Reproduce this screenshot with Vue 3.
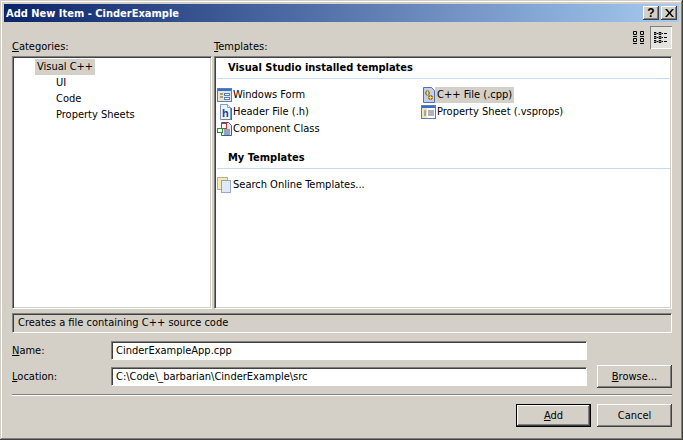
<script setup>
const categories = ['UI', 'Code', 'Property Sheets']
</script>

<template>
  <div class="dialog">
    <div class="titlebar">
      <span class="title">Add New Item - CinderExample</span>
      <button class="cap-btn help">?</button>
      <button class="cap-btn">
        <svg width="9" height="8" viewBox="0 0 9 8"><path d="M0 0h2l2.500 3L7 0h2L5.500 4 9 8H7L4.500 5 2 8H0l3.500-4z" fill="#000"/></svg>
      </button>
    </div>

    <div class="content">
      <div class="labels">
        <div class="cat-label"><u>C</u>ategories:</div>
        <div class="tpl-label">
          <span><u>T</u>emplates:</span>
          <div class="views">
            <span class="view-btn">
              <svg width="13" height="14" viewBox="0 0 13 14" fill="none" stroke="#000">
                <path d="M1.500 .5h3v3h-3zM1.500 7.500h3v3h-3zM8.500 .5h3v3h-3zM8.500 7.500h3v3h-3z"/>
                <path d="M1 5.500h4M1 12.500h4M8 5.500h4M8 12.500h4"/>
              </svg>
            </span>
            <span class="view-btn active">
              <svg width="14" height="12" viewBox="0 0 14 12" fill="none" stroke="#000">
                <path d="M0 .5h2v2H0zM5 .5h2v2H5zM0 4.500h2v2H0zM5 4.500h2v2H5zM0 8.500h2v2H0zM5 8.500h2v2H5z"/>
                <path d="M3 1.500h1M8 1.500h1M3 5.500h1M8 5.500h1M3 9.500h1M8 9.500h1"/>
                <path d="M10 1.500h3M10 5.500h3M10 9.500h3"/>
              </svg>
            </span>
          </div>
        </div>
      </div>

      <div class="panes">
        <div class="sunken tree">
          <div class="tree-root"><span class="selected">Visual C++</span></div>
          <div v-for="c in categories" :key="c" class="tree-child">{{ c }}</div>
        </div>

        <div class="sunken templates">
          <div class="group-head">Visual Studio installed templates</div>
          <div class="columns">
            <div class="col">
              <div class="item">
                <svg class="ico" width="16" height="16" viewBox="0 0 16 16">
                  <rect x=".5" y="1.500" width="14" height="13" fill="#ece6c8" stroke="#5a7eb8"/>
                  <rect x="1" y="2" width="13" height="2" fill="#3a6ec8"/>
                  <rect x="7" y="4" width="7" height="10" fill="#dce8f6"/>
                  <path d="M3 7h3M3 10h3" stroke="#555"/>
                  <rect x="7.500" y="6.500" width="5" height="2" fill="#fff" stroke="#5a7eb8"/>
                  <rect x="7.500" y="10.500" width="5" height="2" fill="#fff" stroke="#5a7eb8"/>
                </svg>
                <span class="item-text">Windows Form</span>
              </div>
              <div class="item">
                <svg class="ico" width="16" height="16" viewBox="0 0 16 16">
                  <path d="M3.500 .5h7l3 3v12h-10z" fill="#eef3fb" stroke="#7d9ac8"/>
                  <path d="M10.500 .5v3h3" fill="#fff" stroke="#7d9ac8"/>
                  <path d="M14.500 4v12H5" fill="none" stroke="#5a6478"/>
                  <text x="5" y="12.500" font-size="11" font-weight="700" font-family="Liberation Sans" fill="#1c3f94">h</text>
                </svg>
                <span class="item-text">Header File (.h)</span>
              </div>
              <div class="item">
                <svg class="ico" width="16" height="16" viewBox="0 0 16 16">
                  <path d="M4.500 1.500h7l3 3v10h-10z" fill="#e8ecf8" stroke="#3d5a96"/>
                  <path d="M7 9h6M7 11h6M7 13h6" stroke="#3d5a96"/>
                  <rect x="4.500" y="2.500" width="5" height="5" fill="#fff" stroke="#c83232"/>
                  <rect x=".5" y="7.500" width="5" height="4" fill="#fff" stroke="#2e8b2e"/>
                </svg>
                <span class="item-text">Component Class</span>
              </div>
            </div>
            <div class="col second">
              <div class="item">
                <svg class="ico" width="16" height="16" viewBox="0 0 16 16">
                  <path d="M2.500 .5h8l3 3v12h-11z" fill="#c4cdec" stroke="#5a6ea8"/>
                  <path d="M4 6h5M6.500 3.500v5M7 10.500h5M9.500 8v5" fill="none" stroke="#8a6c18" stroke-width="2.500"/>
                  <path d="M4.500 6h4M6.500 4v4M7.500 10.500h4M9.500 8.500v4" fill="none" stroke="#f0d860"/>
                </svg>
                <span class="item-text selected">C++ File (.cpp)</span>
              </div>
              <div class="item">
                <svg class="ico" width="16" height="16" viewBox="0 0 16 16">
                  <rect x=".5" y="1.500" width="14" height="13" fill="#fff" stroke="#5a7eb8"/>
                  <rect x="1" y="2" width="13" height="2" fill="#3a6ec8"/>
                  <rect x="1" y="4" width="5" height="10" fill="#ece6c8"/>
                  <path d="M3 7h2M3 9h2M3 11h2M7 7h6M7 9h6M7 11h6" stroke="#667"/>
                </svg>
                <span class="item-text">Property Sheet (.vsprops)</span>
              </div>
            </div>
          </div>
          <div class="group-head my">My Templates</div>
          <div class="item online">
            <svg class="ico" width="16" height="16" viewBox="0 0 16 16">
              <rect x=".5" y=".5" width="10" height="12" fill="#f2eab8" stroke="#b8b088"/>
              <rect x="4.500" y="3.500" width="9" height="12" fill="#dfe9f7" stroke="#3d5a96" stroke-dasharray="1 1"/>
            </svg>
            <span class="item-text">Search Online Templates...</span>
          </div>
        </div>
      </div>

      <div class="desc">Creates a file containing C++ source code</div>

      <div class="form">
        <label class="form-label"><u>N</u>ame:</label>
        <div class="field">CinderExampleApp.cpp</div>
        <span></span>
        <label class="form-label"><u>L</u>ocation:</label>
        <div class="field">C:\Code\_barbarian\CinderExample\src</div>
        <button class="btn"><span><u>B</u>rowse...</span></button>
      </div>

      <div class="sep"></div>

      <div class="actions">
        <button class="btn default"><span><u>A</u>dd</span></button>
        <button class="btn"><span>Cancel</span></button>
      </div>
    </div>
  </div>
</template>

<style>
body {
  background: #d4d0c8;
}
</style>

<style scoped>
* {
  box-sizing: border-box;
}

.dialog {
  width: 683px;
  height: 440px;
  background: #d4d0c8;
  padding: 4px;
  font-family: "DejaVu Sans Condensed", "DejaVu Sans", sans-serif;
  font-stretch: condensed;
  font-size: 11px;
  color: #000;
  box-shadow: inset -1px -1px 0 #404040, inset 1px 1px 0 #d4d0c8, inset -2px -2px 0 #808080, inset 2px 2px 0 #fff;
  overflow: hidden;
}

.titlebar {
  height: 18px;
  display: flex;
  align-items: center;
  gap: 2px;
  padding: 0 2px;
  background: linear-gradient(to right, #0a246a, #a6caf0);
}

.title {
  flex: 1;
  color: #fff;
  font-weight: 700;
  font-size: 11px;
}

.cap-btn {
  width: 16px;
  height: 14px;
  padding: 0;
  margin: 0;
  display: flex;
  align-items: center;
  justify-content: center;
  background: #d4d0c8;
  border: none;
  font: 700 12px "Liberation Sans", sans-serif;
  color: #000;
  box-shadow: inset -1px -1px 0 #404040, inset 1px 1px 0 #fff, inset -2px -2px 0 #808080;
}

.content {
  padding: 0 7px 0 8px;
}

.labels {
  height: 34px;
  display: flex;
  gap: 2px;
}

.cat-label {
  width: 200px;
  padding-top: 18px;
}

.tpl-label {
  flex: 1;
  padding-top: 18px;
  position: relative;
}

.views {
  position: absolute;
  right: 0;
  top: 4px;
  display: flex;
  gap: 1px;
}

.view-btn {
  width: 22px;
  height: 23px;
  display: flex;
  align-items: center;
  justify-content: center;
}

.view-btn.active {
  background: #e4e2dc;
  box-shadow: inset 1px 1px 0 #808080, inset -1px -1px 0 #fff;
}

.panes {
  display: flex;
  gap: 2px;
  height: 253px;
}

.sunken {
  background: #fff;
  border: 1px solid;
  border-color: #808080 #fff #fff #808080;
  box-shadow: inset 1px 1px 0 #404040, inset -1px -1px 0 #d4d0c8;
}

.tree {
  width: 200px;
  padding: 2px 0 0 22px;
}

.tree-root,
.tree-child {
  height: 16px;
  line-height: 16px;
}

.tree-child {
  padding-left: 21px;
}

.selected {
  background: #d4d0c8;
  display: inline-block;
  padding: 0 2px;
  height: 16px;
  line-height: 16px;
}

.templates {
  flex: 1;
  padding-top: 2px;
}

.group-head {
  margin: 0 1px 0 2px;
  height: 20px;
  line-height: 18px;
  padding-left: 11px;
  font-weight: 700;
  border-bottom: 1px solid #c5d9f1;
}

.group-head.my {
  margin-top: 12px;
}

.columns {
  display: flex;
  padding: 7px 0 0 2px;
}

.col {
  width: 204px;
}

.item {
  height: 17px;
  display: flex;
  align-items: center;
}

.online {
  margin: 7px 0 0 2px;
}

.ico {
  flex: none;
}

.item-text {
  padding-right: 2px;
}

.item-text.selected {
  margin-left: -2px;
  padding-left: 2px;
}

.desc {
  margin-top: 4px;
  height: 20px;
  line-height: 18px;
  padding-left: 5px;
  border: 1px solid;
  border-color: #808080 #fff #fff #808080;
  box-shadow: inset 1px 1px 0 #404040;
}

.form {
  margin-top: 6px;
  display: grid;
  grid-template-columns: 99px 476px 75px;
  column-gap: 0;
  row-gap: 3px;
  grid-template-rows: 23px 23px;
  align-items: center;
}

.form .btn {
  margin-left: 10px;
}

.field {
  height: 19px;
  line-height: 17px;
  padding-left: 4px;
  background: #fff;
  border: 1px solid;
  border-color: #808080 #fff #fff #808080;
  box-shadow: inset 1px 1px 0 #404040;
}

.sep {
  margin-top: 6px;
  height: 2px;
  border-top: 1px solid #808080;
  border-bottom: 1px solid #fff;
}

.actions {
  margin-top: 8px;
  display: flex;
  justify-content: flex-end;
  gap: 6px;
}

.btn {
  width: 75px;
  height: 23px;
  padding: 0;
  background: #d4d0c8;
  border: none;
  font: inherit;
  color: #000;
  box-shadow: inset -1px -1px 0 #404040, inset 1px 1px 0 #fff, inset -2px -2px 0 #808080;
}

.btn.default {
  outline: 1px solid #000;
  outline-offset: -1px;
  box-shadow: inset -2px -2px 0 #404040, inset 2px 2px 0 #fff, inset -3px -3px 0 #808080;
}
</style>
